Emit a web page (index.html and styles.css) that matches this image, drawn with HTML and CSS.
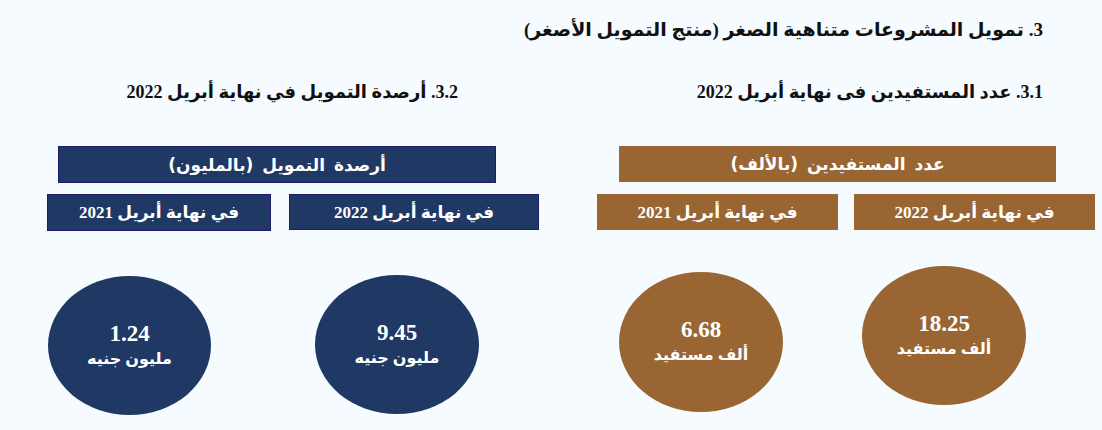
FILE: index.html
```html
<!DOCTYPE html>
<html lang="ar" dir="rtl">
<head>
<meta charset="utf-8">
<title>تمويل المشروعات متناهية الصغر</title>
<link rel="stylesheet" href="styles.css">
</head>
<body>
<main class="page">
  <h1 class="title">3. تمويل المشروعات متناهية الصغر (منتج التمويل الأصغر)</h1>
  <div class="cols">
    <section class="col col-right">
      <h2 class="sub">3.1. عدد المستفيدين فى نهاية أبريل 2022</h2>
      <div class="head brown">عدد المستفيدين (بالألف)</div>
      <div class="pair">
        <div class="year brown">في نهاية أبريل 2022</div>
        <div class="year brown">في نهاية أبريل 2021</div>
      </div>
      <div class="bubbles">
        <div class="bubble brown b1"><span class="num">18.25</span><span class="unit">ألف مستفيد</span></div>
        <div class="bubble brown b2"><span class="num">6.68</span><span class="unit">ألف مستفيد</span></div>
      </div>
    </section>
    <section class="col col-left">
      <h2 class="sub">3.2. أرصدة التمويل في نهاية أبريل 2022</h2>
      <div class="head navy">أرصدة التمويل (بالمليون)</div>
      <div class="pair">
        <div class="year navy y1">في نهاية أبريل 2022</div>
        <div class="year navy y2">في نهاية أبريل 2021</div>
      </div>
      <div class="bubbles">
        <div class="bubble navy b1"><span class="num">9.45</span><span class="unit">مليون جنيه</span></div>
        <div class="bubble navy b2"><span class="num">1.24</span><span class="unit">مليون جنيه</span></div>
      </div>
    </section>
  </div>
</main>
</body>
</html>
```
FILE: styles.css
```css
html, body {
  margin: 0;
  padding: 0;
  background: #f5fbfe;
}
body {
  width: 1102px;
  height: 430px;
  overflow: hidden;
  font-family: "Liberation Serif", "DejaVu Sans", serif;
  color: #1a1a1a;
}
.page {
  display: flex;
  flex-direction: column;
}
.title {
  margin: 16px 59px 0 0;
  font-size: 19px;
  line-height: 28px;
  font-weight: bold;
  color: #111;
}
.cols {
  display: grid;
  grid-template-columns: 551px 551px;
  margin-top: 34px;
}
.col {
  display: flex;
  flex-direction: column;
  align-items: flex-start;
}
.sub {
  margin: 0 59px 0 0;
  font-size: 18px;
  line-height: 28px;
  font-weight: bold;
  color: #111;
}
.col-left .sub { margin-right: 93px; }

.brown { background: #996633; color: #fff; }
.navy { background: #203864; color: #fff; border: 1px solid #1c1c6a; box-sizing: border-box; }

.head {
  margin-top: 40px;
  height: 36px;
  display: flex;
  align-items: center;
  justify-content: center;
  font-family: "DejaVu Sans", sans-serif;
  font-size: 17px;
  word-spacing: 3px;
  font-weight: bold;
}
.col-right .head { width: 437px; margin-right: 46px; }
.col-left .head { width: 438px; height: 37px; margin-right: 55px; }

.pair {
  display: flex;
  margin-top: 12px;
}
.year {
  height: 36px;
  display: flex;
  align-items: center;
  justify-content: center;
  font-size: 17px;
  font-weight: bold;
}
.col-right .pair { margin-right: 7px; gap: 16px; }
.col-right .year { width: 241px; }
.col-left .pair { margin-right: 12px; gap: 18px; margin-top: 11px; }
.col-left .y1 { width: 250px; }
.col-left .y2 { width: 224px; height: 37px; }

.bubbles {
  display: flex;
  align-items: flex-start;
}
.bubble {
  width: 164px;
  height: 139px;
  border-radius: 50%;
  display: flex;
  flex-direction: column;
  align-items: center;
  justify-content: center;
  border: none;
  font-weight: bold;
}
.num {
  font-size: 23px;
  line-height: 25px;
}
.unit {
  font-size: 16px;
  line-height: 25px;
}
.col-right .b1 { margin-right: 76px; margin-top: 36px; }
.col-right .b2 { margin-right: 79px; margin-top: 42px; height: 140px; }
.col-left .b1 { margin-right: 72px; margin-top: 44px; }
.col-left .b2 { margin-right: 104px; margin-top: 45px; width: 163px; }
```
